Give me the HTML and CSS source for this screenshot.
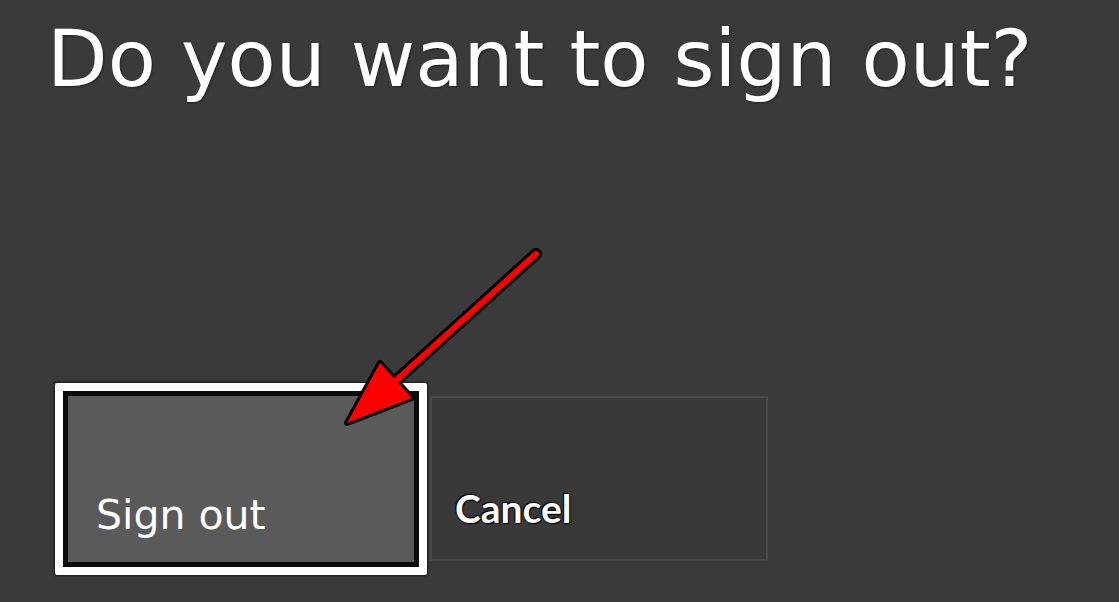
FILE: index.html
```html
<!DOCTYPE html>
<html lang="en">
<head>
<meta charset="utf-8">
<title>Sign out</title>
<link rel="stylesheet" href="styles.css">
</head>
<body>
<main class="screen">
  <h1 class="title">Do you want to sign out?</h1>
  <div class="actions">
    <button class="btn btn-primary"><span class="btn-inner"><span class="label">Sign out</span></span></button>
    <button class="btn btn-secondary"><span class="label">Cancel</span></button>
  </div>
  <svg class="arrow" width="1119" height="602" viewBox="0 0 1119 602" aria-hidden="true">
    <line x1="536" y1="254" x2="390" y2="386" stroke="#000" stroke-width="12" stroke-linecap="round"/>
    <polygon points="380,363 412,398 347,423" fill="#000" stroke="#000" stroke-width="6" stroke-linejoin="round"/>
    <line x1="536" y1="254" x2="390" y2="386" stroke="#ff0000" stroke-width="6" stroke-linecap="round"/>
    <polygon points="380,363 412,398 347,423" fill="#ff0000"/>
  </svg>
</main>
</body>
</html>
```
FILE: styles.css
```css
html, body {
  margin: 0;
  padding: 0;
  background: #3a3a3a;
}
.screen {
  position: relative;
  width: 1119px;
  height: 602px;
  overflow: hidden;
  background: #3a3a3a;
}
.title {
  margin: 0;
  padding: 20px 0 0 47px;
  font-family: "DejaVu Sans", Verdana, sans-serif;
  font-weight: normal;
  font-size: 78.8px;
  line-height: 1;
  color: #ffffff;
  text-shadow: 1px 1px 2px rgba(0,0,0,0.45);
}
.actions {
  display: flex;
  align-items: center;
  gap: 3px;
  margin: 284px 0 0 55px;
}
.btn {
  padding: 0;
  margin: 0;
  font: inherit;
  color: #fff;
  cursor: pointer;
  display: flex;
  box-sizing: border-box;
}
.btn-primary {
  width: 372px;
  height: 192px;
  border: 8px solid #ffffff;
  border-radius: 2px;
  background: #000;
  box-shadow: 0 0 2px 1px rgba(0,0,0,0.6);
}
.btn-inner {
  flex: 1;
  display: flex;
  align-items: flex-end;
  border: 5px solid #0a0a0a;
  background: #5a5a5a;
  padding: 0 0 26px 28px;
}
.btn-primary .label {
  font-family: "DejaVu Sans", Verdana, sans-serif;
  font-size: 41px;
  line-height: 1;
  color: #fff;
}
.btn-secondary {
  width: 338px;
  height: 165px;
  border: 2px solid #4a4a4a;
  background: #393939;
  align-items: flex-end;
  padding: 0 0 31px 23px;
}
.btn-secondary .label {
  font-family: Lato, "Open Sans", sans-serif;
  font-weight: bold;
  font-size: 39px;
  line-height: 1;
  color: #fff;
  text-shadow: 0 0 2px #000, 1px 1px 1px #000, -1px -1px 1px #000;
}
.arrow {
  position: absolute;
  left: 0;
  top: 0;
  pointer-events: none;
}
```
